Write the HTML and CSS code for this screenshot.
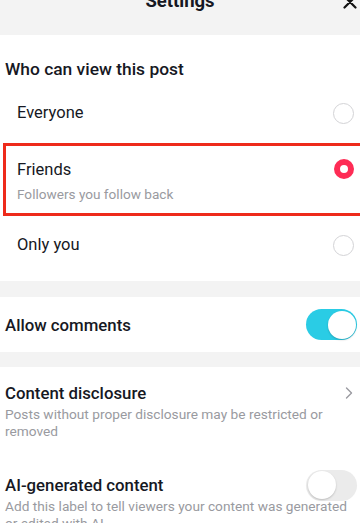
FILE: index.html
```html
<!DOCTYPE html>
<html lang="en">
<head>
<meta charset="utf-8">
<title>Settings</title>
<link rel="stylesheet" href="styles.css">
</head>
<body>
<div class="page">
  <header class="topbar">
    <span class="spacer"></span>
    <h1 class="title">Settings</h1>
    <span class="close">
      <svg width="14" height="14" viewBox="0 0 14 14"><path d="M1.5 1.5 L12.5 12.5 M12.5 1.5 L1.5 12.5" stroke="#111" stroke-width="2.2" stroke-linecap="round" fill="none"/></svg>
    </span>
  </header>

  <section class="card privacy">
    <h2 class="section-title">Who can view this post</h2>
    <div class="option">
      <span class="option-label">Everyone</span>
      <span class="radio"></span>
    </div>
    <div class="option option-selected">
      <div class="option-text">
        <span class="option-label">Friends</span>
        <span class="option-sub">Followers you follow back</span>
      </div>
      <span class="radio radio-on"></span>
    </div>
    <div class="option">
      <span class="option-label">Only you</span>
      <span class="radio"></span>
    </div>
  </section>

  <div class="divider"></div>

  <section class="card comments">
    <span class="row-title">Allow comments</span>
    <span class="toggle toggle-on"><span class="knob"></span></span>
  </section>

  <div class="divider divider-b"></div>

  <section class="card more">
    <div class="item">
      <div class="item-head">
        <span class="row-title">Content disclosure</span>
        <svg class="chevron" width="8" height="12" viewBox="0 0 8 12"><path d="M1.5 1 L6.5 6 L1.5 11" stroke="#9a9aa0" stroke-width="1.4" fill="none" stroke-linecap="round" stroke-linejoin="round"/></svg>
      </div>
      <p class="item-desc">Posts without proper disclosure may be restricted or removed</p>
    </div>
    <div class="item item-ai">
      <div class="item-head">
        <span class="row-title">AI-generated content</span>
        <span class="toggle toggle-off"><span class="knob"></span></span>
      </div>
      <p class="item-desc">Add this label to tell viewers your content was generated or edited with AI.</p>
    </div>
  </section>
</div>
</body>
</html>
```

FILE: styles.css
```css
* { box-sizing: border-box; }
html, body { margin: 0; padding: 0; }
body {
  background: #fff;
  font-family: Roboto, "Liberation Sans", Arial, sans-serif;
  color: #161823;
  overflow: hidden;
  width: 360px;
  height: 523px;
}
.page { width: 360px; }

.topbar {
  height: 35px;
  background: #f3f3f3;
  display: grid;
  grid-template-columns: 1fr auto 1fr;
  align-items: start;
}
.title {
  margin: -9px 0 0;
  font-size: 18.5px;
  line-height: 20px;
  font-weight: 700;
  color: #161823;
}
.close {
  justify-self: end;
  margin: -5px 3px 0 0;
  display: flex;
}

.card { background: #fff; }

.privacy { padding: 23px 0 14px; }
.section-title {
  margin: 0 0 11px 5px;
  font-size: 17.4px;
  line-height: 22px;
  font-weight: 500;
}
.option {
  height: 44px;
  display: flex;
  align-items: center;
  justify-content: space-between;
  padding: 0 6px 0 17px;
}
.option-label {
  font-size: 16.5px;
  line-height: 22px;
  color: #161823;
}
.option-selected {
  height: 73px;
  margin: 8px -8px 7px 3px;
  border: 3px solid #ee2a1b;
  padding: 13px 11px 10px 11px;
  align-items: flex-start;
}
.option-text { display: flex; flex-direction: column; }
.option-sub {
  margin-top: 4px;
  font-size: 13.6px;
  line-height: 18px;
  color: #999aa0;
}
.radio {
  width: 21px;
  height: 21px;
  border-radius: 50%;
  border: 1px solid #d3d3d6;
  flex: none;
}
.radio-on {
  width: 20px;
  height: 20px;
  border: 6.5px solid #fe2c55;
  background: #fff;
}

.divider { height: 16px; background: #f3f3f3; }
.divider-b { height: 15px; }

.comments {
  height: 55px;
  display: flex;
  align-items: center;
  justify-content: space-between;
  padding: 0 3px 0 5px;
}
.row-title {
  font-size: 16.8px;
  line-height: 22px;
  font-weight: 500;
  color: #161823;
}

.toggle {
  width: 51px;
  height: 31px;
  border-radius: 16px;
  display: flex;
  align-items: center;
  padding: 1.5px;
  flex: none;
}
.toggle-on {
  background: #2accE5;
  justify-content: flex-end;
}
.toggle-off {
  background: #ebebeb;
  justify-content: flex-start;
}
.knob {
  width: 28px;
  height: 28px;
  border-radius: 50%;
  background: #fff;
  box-shadow: 0 1px 2px rgba(0,0,0,0.2);
}

.more { padding: 15px 3px 0 5px; }
.item-head {
  display: flex;
  align-items: center;
  justify-content: space-between;
  height: 22px;
}
.chevron { margin-right: 4px; }
.item-desc {
  margin: 2px 0 0;
  font-size: 13.7px;
  line-height: 17px;
  color: #999aa0;
}
.item-ai { margin-top: 34px; }
.item-ai .toggle { margin: -5px 0; }
```
